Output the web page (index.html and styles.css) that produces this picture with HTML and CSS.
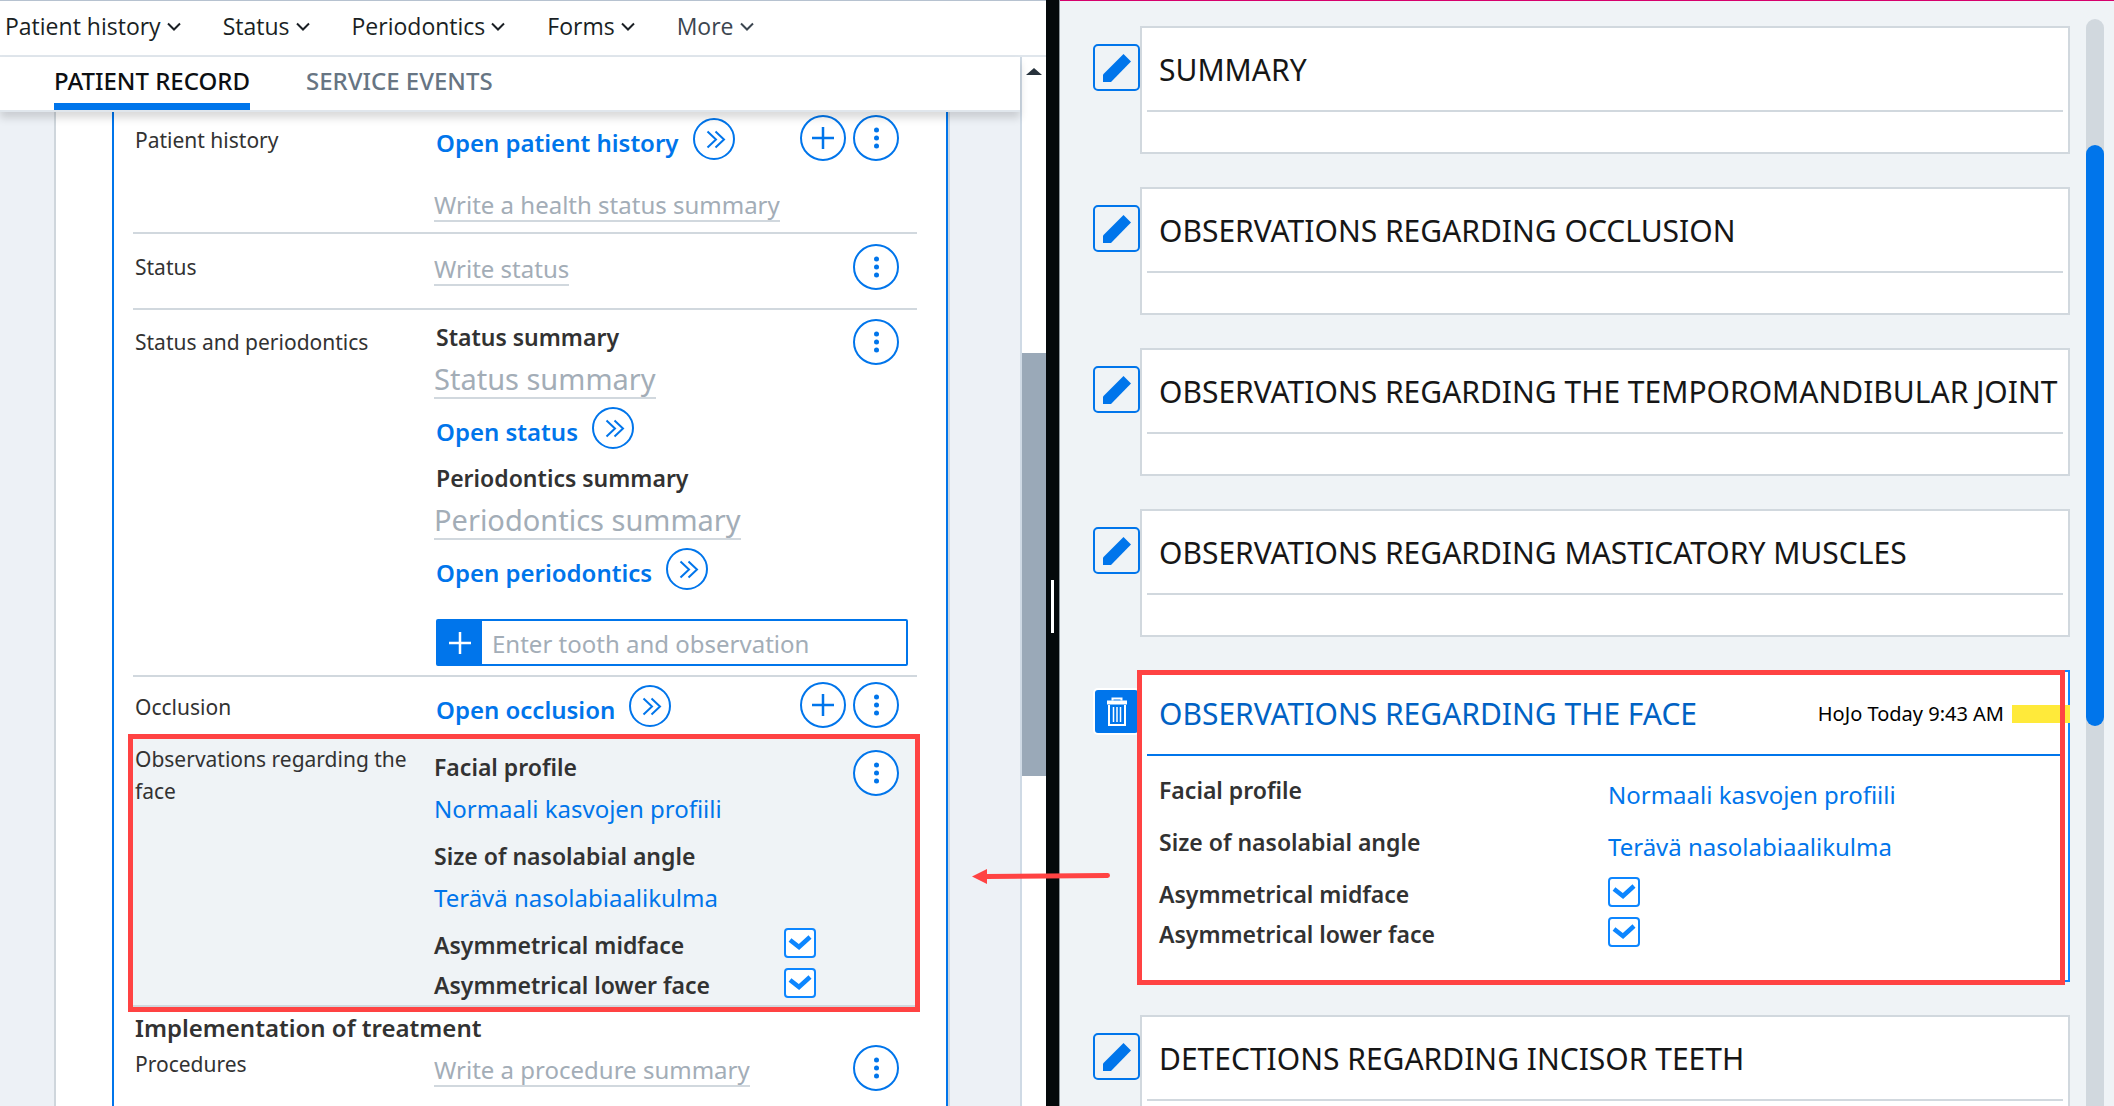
FILE: index.html
```html
<!DOCTYPE html>
<html lang="en">
<head>
<meta charset="utf-8">
<title>Patient record</title>
<link rel="stylesheet" href="styles.css">
</head>
<body>
<svg class="sprite" aria-hidden="true">
  <symbol id="i-chevron" viewBox="0 0 14 9"><path d="M1 1.500l6 6 6-6" fill="none" stroke="currentColor" stroke-width="2"/></symbol>
  <symbol id="i-open" viewBox="0 0 42 42"><circle cx="21" cy="21" r="20" fill="none" stroke="currentColor" stroke-width="2"/><path d="M14.500 13.500l8.500 8-8.500 8M22.500 13.500l8.500 8-8.500 8" fill="none" stroke="currentColor" stroke-width="2"/></symbol>
  <symbol id="i-add" viewBox="0 0 46 46"><circle cx="23" cy="23" r="22" fill="#fff" stroke="currentColor" stroke-width="2"/><path d="M12 23h22M23 12v22" stroke="currentColor" stroke-width="2.500"/></symbol>
  <symbol id="i-menu" viewBox="0 0 46 46"><circle cx="23" cy="23" r="22" fill="#fff" stroke="currentColor" stroke-width="2"/><circle cx="23.500" cy="15" r="2.500" fill="currentColor"/><circle cx="23.500" cy="23" r="2.500" fill="currentColor"/><circle cx="23.500" cy="31" r="2.500" fill="currentColor"/></symbol>
  <symbol id="i-pencil" viewBox="0 0 28 28"><path d="M0 20.500L20.500 0l7.500 7.500L8 28H0z" fill="currentColor"/></symbol>
  <symbol id="i-trash" viewBox="0 0 22 30"><path d="M6.500 3.500V1.500h9v2" fill="none" stroke="currentColor" stroke-width="2"/><path d="M1 5.500h20" stroke="currentColor" stroke-width="4"/><path d="M3 8v20h16V8" fill="none" stroke="currentColor" stroke-width="2"/><path d="M7.500 10v15M11 10v15M14.500 10v15" stroke="currentColor" stroke-width="1.500"/></symbol>
</svg>
<div class="app">
  <main class="record">
    <nav class="menu">
      <button>Patient history <svg class="chevron"><use href="#i-chevron"/></svg></button>
      <button>Status <svg class="chevron"><use href="#i-chevron"/></svg></button>
      <button>Periodontics <svg class="chevron"><use href="#i-chevron"/></svg></button>
      <button>Forms <svg class="chevron"><use href="#i-chevron"/></svg></button>
      <button class="menu-more">More <svg class="chevron"><use href="#i-chevron"/></svg></button>
    </nav>
    <div class="workspace">
      <div class="view">
        <div class="tabs">
          <a href="#record" class="tab tab-active">PATIENT RECORD</a>
          <a href="#events" class="tab">SERVICE EVENTS</a>
        </div>
        <div class="page">
          <div class="sheet">
            <section class="row row-history">
              <label class="row-label" for="history">Patient history</label>
              <div class="row-body">
                <a href="#history" class="open">Open patient history <svg class="open-icon"><use href="#i-open"/></svg></a>
                <input id="history" class="write" placeholder="Write a health status summary">
              </div>
              <div class="row-actions">
                <button class="round" aria-label="Add"><svg><use href="#i-add"/></svg></button>
                <button class="round" aria-label="Menu"><svg><use href="#i-menu"/></svg></button>
              </div>
            </section>
            <section class="row row-status">
              <label class="row-label" for="status">Status</label>
              <div class="row-body"><input id="status" class="write" placeholder="Write status"></div>
              <div class="row-actions"><button class="round" aria-label="Menu"><svg><use href="#i-menu"/></svg></button></div>
            </section>
            <section class="row row-perio">
              <h2 class="row-label">Status and periodontics</h2>
              <div class="row-body">
                <label class="name" for="status-summary">Status summary</label>
                <input id="status-summary" class="write write-large" placeholder="Status summary">
                <a href="#status" class="open">Open status <svg class="open-icon"><use href="#i-open"/></svg></a>
                <label class="name" for="perio-summary">Periodontics summary</label>
                <input id="perio-summary" class="write write-large" placeholder="Periodontics summary">
                <a href="#perio" class="open">Open periodontics <svg class="open-icon"><use href="#i-open"/></svg></a>
                <div class="finder">
                  <button class="finder-add" aria-label="Add observation"><svg viewBox="0 0 22 22"><path d="M0 11h22M11 0v22" stroke="currentColor" stroke-width="2.500"/></svg></button>
                  <input class="finder-input" aria-label="Tooth and observation" placeholder="Enter tooth and observation">
                </div>
              </div>
              <div class="row-actions"><button class="round" aria-label="Menu"><svg><use href="#i-menu"/></svg></button></div>
            </section>
            <section class="row row-occlusion">
              <h2 class="row-label">Occlusion</h2>
              <div class="row-body"><a href="#occlusion" class="open">Open occlusion <svg class="open-icon"><use href="#i-open"/></svg></a></div>
              <div class="row-actions">
                <button class="round" aria-label="Add"><svg><use href="#i-add"/></svg></button>
                <button class="round" aria-label="Menu"><svg><use href="#i-menu"/></svg></button>
              </div>
            </section>
            <section class="row row-face">
              <h2 class="row-label">Observations regarding the face</h2>
              <div class="row-body">
                <p class="name">Facial profile</p>
                <a href="#profile" class="value">Normaali kasvojen profiili</a>
                <p class="name">Size of nasolabial angle</p>
                <a href="#angle" class="value">Terävä nasolabiaalikulma</a>
                <label class="check-line name">Asymmetrical midface <input type="checkbox" class="check" checked></label>
                <label class="check-line name">Asymmetrical lower face <input type="checkbox" class="check" checked></label>
              </div>
              <div class="row-actions"><button class="round" aria-label="Menu"><svg><use href="#i-menu"/></svg></button></div>
            </section>
            <h2 class="section-title">Implementation of treatment</h2>
            <section class="row row-procedures">
              <label class="row-label" for="procedures">Procedures</label>
              <div class="row-body"><input id="procedures" class="write" placeholder="Write a procedure summary"></div>
              <div class="row-actions"><button class="round" aria-label="Menu"><svg><use href="#i-menu"/></svg></button></div>
            </section>
          </div>
        </div>
      </div>
      <div class="scroll-left"><span class="scroll-up"></span><span class="scroll-thumb"></span></div>
    </div>
  </main>
  <div class="splitter"><span class="splitter-grip"></span></div>
  <aside class="observations">
    <div class="cards">
      <article class="entry">
        <button class="tool" aria-label="Edit"><svg><use href="#i-pencil"/></svg></button>
        <div class="card"><header class="card-head"><h3>SUMMARY</h3></header><div class="card-empty"></div></div>
      </article>
      <article class="entry">
        <button class="tool" aria-label="Edit"><svg><use href="#i-pencil"/></svg></button>
        <div class="card"><header class="card-head"><h3>OBSERVATIONS REGARDING OCCLUSION</h3></header><div class="card-empty"></div></div>
      </article>
      <article class="entry">
        <button class="tool" aria-label="Edit"><svg><use href="#i-pencil"/></svg></button>
        <div class="card"><header class="card-head"><h3>OBSERVATIONS REGARDING THE TEMPOROMANDIBULAR JOINT</h3></header><div class="card-empty"></div></div>
      </article>
      <article class="entry">
        <button class="tool" aria-label="Edit"><svg><use href="#i-pencil"/></svg></button>
        <div class="card"><header class="card-head"><h3>OBSERVATIONS REGARDING MASTICATORY MUSCLES</h3></header><div class="card-empty"></div></div>
      </article>
      <article class="entry">
        <button class="tool tool-delete" aria-label="Delete"><svg><use href="#i-trash"/></svg></button>
        <div class="card card-active">
          <header class="card-head"><h3>OBSERVATIONS REGARDING THE FACE</h3><span class="stamp">HoJo Today 9:43 AM</span><span class="flag"></span></header>
          <div class="card-body">
            <div class="pair"><p class="name">Facial profile</p><a href="#profile" class="value">Normaali kasvojen profiili</a></div>
            <div class="pair"><p class="name">Size of nasolabial angle</p><a href="#angle" class="value">Terävä nasolabiaalikulma</a></div>
            <label class="pair pair-check name">Asymmetrical midface <input type="checkbox" class="check" checked></label>
            <label class="pair pair-check name">Asymmetrical lower face <input type="checkbox" class="check" checked></label>
          </div>
        </div>
      </article>
      <article class="entry">
        <button class="tool" aria-label="Edit"><svg><use href="#i-pencil"/></svg></button>
        <div class="card"><header class="card-head"><h3>DETECTIONS REGARDING INCISOR TEETH</h3></header><div class="card-empty"></div></div>
      </article>
    </div>
    <div class="scroll-right"><span class="scroll-right-thumb"></span></div>
    <svg class="arrow" viewBox="0 0 138 16" aria-hidden="true"><path d="M14 8.500L135.500 7.500" stroke="#ff4343" stroke-width="5" stroke-linecap="round"/><path d="M0 8.500L15 1v15z" fill="#ff4343"/></svg>
  </aside>
</div>
</body>
</html>
```
FILE: styles.css
```css
:root {
  --blue: #0075eb;
  --red: #ff4343;
  --line: #d1d8de;
  --mist: #eff3f6;
  --ink: #323232;
  --hint: #a3adb7;
}
* { box-sizing: border-box; }
body {
  margin: 0;
  font-family: "Noto Sans", "Open Sans", sans-serif;
  font-size: 24px;
  line-height: 32px;
  color: var(--ink);
  background: var(--mist);
}
h2, h3, p { margin: 0; font-size: 24px; font-weight: 400; }
a { text-decoration: none; color: var(--blue); }
button { font: inherit; color: inherit; background: none; border: 0; padding: 0; }
input { font: inherit; color: inherit; margin: 0; padding: 0; border: 0; background: none; }
input::placeholder { color: var(--hint); opacity: 1; }
svg { display: block; }
.sprite { position: absolute; width: 0; height: 0; }

.app {
  display: grid;
  grid-template-columns: minmax(0, 1046fr) 14px minmax(0, 1054fr);
  height: 100vh;
  overflow: hidden;
}

/* Left pane */
.record {
  display: flex;
  flex-direction: column;
  min-height: 0;
  background: #fff;
  border-top: 1px solid #b6c2d0;
}
.menu {
  display: flex;
  flex: none;
  gap: 42px;
  height: 56px;
  padding: 0 5px 4px;
  font-family: "Open Sans", "Noto Sans", sans-serif;
  font-size: 23px;
  color: #1a1f24;
  border-bottom: 2px solid #e0e6ec;
}
.menu button { display: flex; align-items: center; gap: 6px; }
.menu .menu-more { color: #3c4650; }
.chevron { width: 14px; height: 9px; }
.workspace { display: flex; flex: 1; min-height: 0; }
.view {
  display: flex;
  flex-direction: column;
  flex: 1;
  min-width: 0;
  background: #edf1f6;
  border-right: 2px solid #cfdae5;
}
.tabs {
  position: relative;
  z-index: 1;
  display: flex;
  flex: none;
  gap: 56px;
  height: 55px;
  padding-left: 54px;
  background: #fff;
  border-bottom: 2px solid #e0e6ec;
  box-shadow: 0 6px 8px rgba(0, 0, 0, .15);
}
.tab { padding-top: 8px; font-weight: 500; color: #677583; }
.tab-active { color: #0c0f12; border-bottom: 7px solid var(--blue); }
.page {
  flex: 1;
  min-height: 0;
  overflow: hidden;
  margin-left: 54px;
  padding: 0 72px 0 56px;
  border-left: 2px solid #cfd6dc;
  background: linear-gradient(#edf1f6, #edf1f6) right / 70px 100% no-repeat #fff;
}
.sheet {
  min-height: 100%;
  padding: 0 29px 0 19px;
  background: #fff;
  border: solid var(--blue);
  border-width: 0 2px;
  box-shadow: 2px 0 0 #cfd6dc;
}
.row {
  position: relative;
  display: grid;
  grid-template-columns: 299px minmax(0, 1fr);
  padding-left: 2px;
  border-bottom: 2px solid var(--line);
}
.row-label { font-size: 21px; padding-right: 18px; }
.row-body { display: flex; flex-direction: column; align-items: flex-start; }
.row-actions { position: absolute; right: 18px; display: flex; gap: 7px; }
.round, .round svg { width: 46px; height: 46px; color: var(--blue); }

.name { font-weight: 600; font-size: 23px; }
.open {
  display: flex;
  align-items: flex-end;
  gap: 14px;
  height: 42px;
  font-weight: 600;
  line-height: 34px;
}
.open-icon { width: 42px; height: 42px; }
.open, .finder, .row-perio .name { margin-left: 2px; }
.write {
  field-sizing: content;
  height: 33px;
  border-bottom: 2px solid var(--line);
}
.write-large { height: 40px; font-size: 29px; }

.row-history .row-label { padding-top: 12px; }
.row-history .row-body { gap: 29px; padding: 6px 0 10px; }
.row-history .row-actions { top: 3px; }
.row-status .row-label { padding-top: 17px; }
.row-status .row-body { padding: 19px 0 22px; }
.row-status .row-actions { top: 10px; }
.row-perio .row-label { padding-top: 16px; }
.row-perio .row-body { padding: 11px 0 9px; }
.row-perio .row-actions { top: 9px; }
.row-perio .write { margin: 6px 0 8px; }
.row-perio .open + .name { margin-top: 13px; }
.row-occlusion { border-bottom: 0; }
.row-occlusion .row-label { padding-top: 14px; }
.row-occlusion .row-body { padding: 8px 0 12px; }
.row-occlusion .row-actions { top: 5px; }

.finder {
  display: flex;
  align-self: stretch;
  height: 47px;
  margin-top: 29px;
  margin-right: 9px;
  border: 2px solid var(--blue);
  border-radius: 2px;
}
.finder-add {
  display: grid;
  place-items: center;
  width: 44px;
  color: #fff;
  background: var(--blue);
}
.finder-add svg { width: 22px; height: 22px; }
.finder-input { flex: 1; min-width: 0; padding: 2px 10px 0; }

.row-face { background: var(--mist); }
.row-face::after {
  content: "";
  position: absolute;
  inset: -5px -3px -7px -5px;
  border: 5px solid var(--red);
  pointer-events: none;
}
.row-face .row-label { padding-top: 4px; }
.row-face .row-body { padding: 12px 0 4px; }
.row-face .row-actions { top: 11px; }
.row-face .value { margin: 10px 0 15px; }
.check-line {
  display: flex;
  align-items: flex-start;
  justify-content: space-between;
  width: 382px;
  height: 32px;
  margin-bottom: 8px;
}
.check-line:last-child { margin-bottom: 0; }
.check {
  appearance: none;
  width: 32px;
  height: 30px;
  margin-top: -1px;
  border: 2px solid #0d86ff;
  border-radius: 4px;
  background: #fff url("data:image/svg+xml,%3Csvg xmlns='http://www.w3.org/2000/svg' viewBox='0 0 28 26'%3E%3Cpath d='M4 10l9 7L24 7' fill='none' stroke='%230d86ff' stroke-width='4.500'/%3E%3C/svg%3E") center / 28px 26px no-repeat;
}
.section-title { margin-top: 5px; padding-left: 2px; font-weight: 600; }
.row-procedures .row-label { padding-top: 4px; }
.row-procedures .row-body { padding: 10px 0 22px; }
.row-procedures .row-actions { top: 1px; }

.scroll-left {
  display: flex;
  flex-direction: column;
  align-items: center;
  width: 24px;
  background: #fff;
}
.scroll-up {
  margin: 11px 0 278px;
  border: solid transparent;
  border-width: 0 8px 7px;
  border-bottom-color: #27323c;
}
.scroll-thumb { width: 100%; height: 423px; background: #9aa9b8; }

/* Divider */
.splitter {
  display: grid;
  place-items: center;
  padding-top: 107px;
  background: #04090b;
  border-right: 1px solid #8d969c;
}
.splitter-grip { width: 3px; height: 53px; background: #fff; }

/* Right pane */
.observations {
  position: relative;
  display: flex;
  min-height: 0;
  background: var(--mist);
  border-top: 1px solid #d6006c;
}
.cards {
  display: flex;
  flex: 1;
  flex-direction: column;
  gap: 33px;
  min-width: 0;
  padding: 25px 16px 0 33px;
}
.entry { display: flex; flex: none; align-items: flex-start; }
.tool {
  display: grid;
  flex: none;
  place-items: center;
  width: 47px;
  height: 47px;
  margin-top: 18px;
  color: var(--blue);
  border: 2px solid var(--blue);
  border-radius: 5px;
}
.tool svg { width: 28px; height: 28px; }
.tool-delete { color: #fff; background: var(--blue); border-color: #fff; }
.tool-delete svg { width: 22px; height: 30px; }
.card {
  position: relative;
  flex: 1;
  min-width: 0;
  padding: 0 5px;
  background: #fff;
  border: 2px solid var(--line);
}
.card-head {
  display: flex;
  align-items: center;
  height: 84px;
  padding: 2px 0 0 12px;
  white-space: nowrap;
  color: #161616;
  border-bottom: 2px solid var(--line);
}
.card-head h3 { flex: 1; font-size: 30px; }
.card-empty { height: 40px; }
.card-active { border-color: #0d86ff; }
.card-active::after {
  content: "";
  position: absolute;
  inset: -2px 3px -5px -5px;
  border: 5px solid var(--red);
  pointer-events: none;
}
.card-active .card-head { border-color: var(--blue); }
.card-active h3 { color: #0062c4; }
.stamp { font-size: 20px; color: #000; }
.flag { width: 58px; height: 18px; margin: 0 -7px 0 8px; background: #ffea3a; }
.card-body { padding: 18px 0 30px 12px; }
.pair { display: grid; grid-template-columns: 449px minmax(0, 1fr); margin-bottom: 14px; }
.pair .value { padding-top: 5px; }
.pair p { height: 38px; }
.pair-check { height: 32px; margin-bottom: 8px; }
.pair-check:last-child { margin-bottom: 0; }
.scroll-right {
  width: 18px;
  margin: 18px 10px -20px 0;
  padding-top: 126px;
  background: var(--line);
  border-radius: 9px;
}
.scroll-right-thumb {
  display: block;
  height: 581px;
  background: var(--blue);
  border-radius: 9px;
}
.arrow {
  position: absolute;
  top: 867px;
  left: -88px;
  width: 138px;
  height: 16px;
}
```
